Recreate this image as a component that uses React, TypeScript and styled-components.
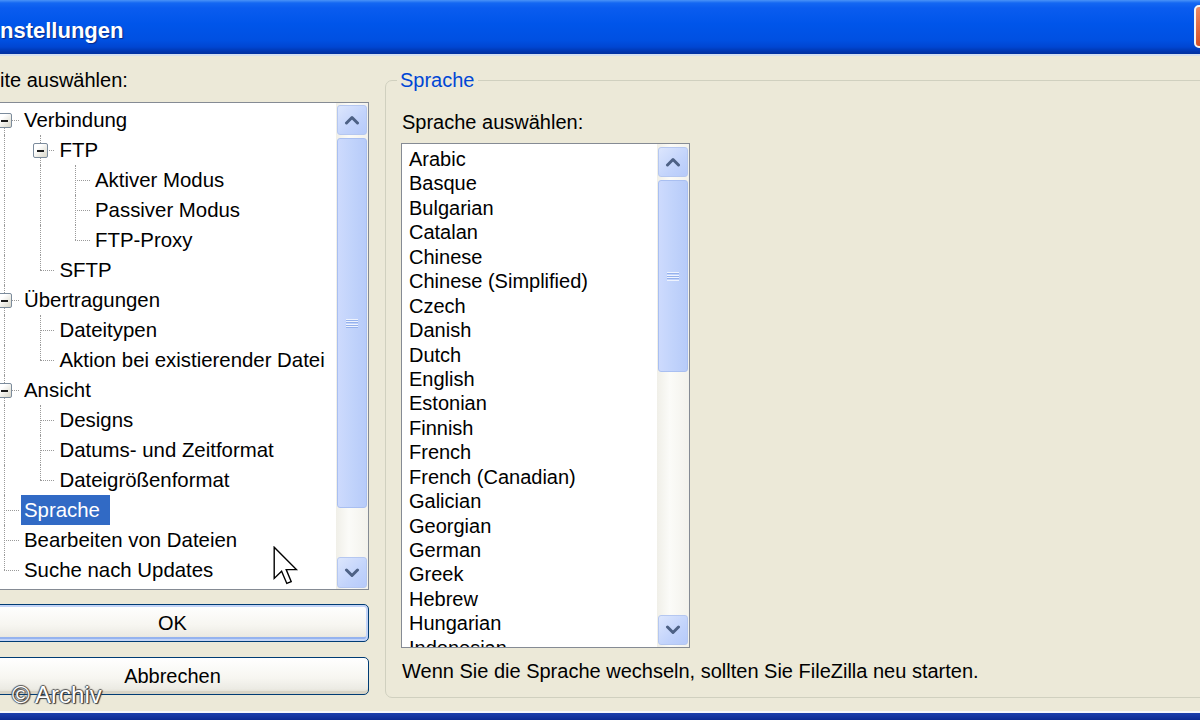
import React from 'react';
import styled, { createGlobalStyle } from 'styled-components';

const Global = createGlobalStyle`
  html, body { margin: 0; padding: 0; background: #ece9d8; }
  body { font-family: "Liberation Sans", Arial, sans-serif; }
`;

const Screen = styled.div`
  position: relative;
  width: 1200px;
  height: 720px;
  overflow: hidden;
  display: flex;
  flex-direction: column;
  background: #ece9d8;
  color: #000;
  font-size: 20px;
`;

const TitleBar = styled.div`
  height: 56px;
  flex-shrink: 0;
  box-sizing: border-box;
  padding-top: 7px;
  display: flex;
  align-items: center;
  justify-content: space-between;
  background: linear-gradient(
    to bottom,
    #4a93f7 0px,
    #1467f2 3px,
    #0a5cef 8px,
    #0055ea 24px,
    #0050e2 40px,
    #0046d2 47px,
    #0033aa 52px,
    #0030a0 54px
  );
  border-bottom: 2px solid #d3deee;
`;

const TitleText = styled.span`
  color: #fff;
  font-weight: 700;
  font-size: 22px;
  line-height: 30px;
  text-shadow: 1px 1px 1px #0a2a88;
  white-space: nowrap;
`;

const CloseBtn = styled.span`
  align-self: flex-start;
  margin-top: -2px;
  margin-right: -34px;
  width: 40px;
  height: 43px;
  box-sizing: border-box;
  border: 2px solid #f4f4f4;
  border-radius: 5px;
  background: linear-gradient(135deg, #ec8c66, #d24a22 60%, #c23a14);
`;

const Body = styled.div`
  flex: 1;
  min-height: 0;
  display: flex;
  gap: 16px;
`;

const LeftCol = styled.div`
  margin-left: -24px;
  width: 393px;
  flex-shrink: 0;
  display: flex;
  flex-direction: column;
  padding-top: 12px;
`;

const Caption = styled.div<{ $indent?: number }>`
  line-height: 24px;
  height: 24px;
  padding-left: ${(p) => p.$indent ?? 0}px;
  white-space: nowrap;
`;

const ListFrame = styled.div<{ $h: number; $w?: number }>`
  height: ${(p) => p.$h}px;
  width: ${(p) => (p.$w ? `${p.$w}px` : 'auto')};
  box-sizing: border-box;
  border: 1px solid #858b94;
  background: #fff;
  display: flex;
  flex-shrink: 0;
`;

const TreeRows = styled.div`
  flex: 1;
  min-width: 0;
  overflow: hidden;
  padding: 2px 0 0 7px;
  font-size: 20.4px;
`;

const Row = styled.div`
  height: 30px;
  display: flex;
  align-items: stretch;
  white-space: nowrap;
`;

const Guide = styled.span<{ $on: boolean }>`
  position: relative;
  width: 35.5px;
  flex-shrink: 0;
  &::before {
    content: '';
    display: ${(p) => (p.$on ? 'block' : 'none')};
    position: absolute;
    left: 20px;
    top: 0;
    bottom: 0;
    border-left: 1px dotted #9a9a9a;
  }
`;

type ConnKind = 'full' | 'top' | 'bottom';

const Connector = styled.span<{ $kind: ConnKind }>`
  position: relative;
  width: 35.5px;
  flex-shrink: 0;
  &::before {
    content: '';
    position: absolute;
    left: 20px;
    top: ${(p) => (p.$kind === 'bottom' ? '50%' : '0')};
    bottom: ${(p) => (p.$kind === 'top' ? '50%' : '0')};
    border-left: 1px dotted #9a9a9a;
  }
  &::after {
    content: '';
    position: absolute;
    left: 20px;
    right: 1px;
    top: 50%;
    border-top: 1px dotted #9a9a9a;
  }
`;

const Expander = styled.span`
  position: absolute;
  z-index: 1;
  left: 13px;
  top: 8px;
  width: 15px;
  height: 15px;
  box-sizing: border-box;
  border: 1px solid #7b8b9c;
  border-radius: 2px;
  background: linear-gradient(135deg, #ffffff 30%, #d8d6c8);
  display: flex;
  align-items: center;
  justify-content: center;
  &::before {
    content: '';
    width: 7px;
    height: 2px;
    background: #1b1b1b;
  }
`;

const ItemLabel = styled.span<{ $sel?: boolean }>`
  margin-left: 1.5px;
  padding: 0 10px 0 3px;
  line-height: 30px;
  background: ${(p) => (p.$sel ? '#316ac5' : 'transparent')};
  color: ${(p) => (p.$sel ? '#fff' : '#000')};
`;

const ScrollBar = styled.div<{ $pt: number; $pb: number }>`
  width: 32px;
  flex-shrink: 0;
  box-sizing: border-box;
  padding: ${(p) => p.$pt}px 1px ${(p) => p.$pb}px 1px;
  display: flex;
  flex-direction: column;
  background: linear-gradient(90deg, #f0efe8, #fbfbf8 40%, #f3f2ec);
`;

const ArrowBtn = styled.div`
  height: 30px;
  flex-shrink: 0;
  box-sizing: border-box;
  border: 1px solid #b5c7f0;
  border-radius: 3px;
  background: linear-gradient(135deg, #dce6fd, #c2d3fb 60%, #b6cafa);
  display: flex;
  align-items: center;
  justify-content: center;
`;

const Thumb = styled.div<{ $h: number }>`
  margin-top: 3px;
  height: ${(p) => p.$h}px;
  flex-shrink: 0;
  box-sizing: border-box;
  border: 1px solid #a9bff1;
  border-radius: 3px;
  background: linear-gradient(90deg, #cddafd, #c1d3fb 50%, #b7cbf9);
  display: flex;
  align-items: center;
  justify-content: center;
`;

const Grip = styled.span`
  width: 12px;
  height: 9px;
  background: repeating-linear-gradient(
    to bottom,
    #eef3fe 0px,
    #eef3fe 1px,
    #95b1ec 1px,
    #95b1ec 2px,
    transparent 2px,
    transparent 2.5px
  );
`;

const Spacer = styled.div`
  flex: 1;
`;

const PushButton = styled.button<{ $default?: boolean; $mt: number }>`
  margin-top: ${(p) => p.$mt}px;
  height: 38px;
  flex-shrink: 0;
  box-sizing: border-box;
  border: 1px solid #003c74;
  border-radius: 5px;
  font-family: "Liberation Sans", Arial, sans-serif;
  font-size: 20px;
  color: #000;
  padding: 0;
  background: linear-gradient(180deg, #ffffff 0%, #f7f6f1 55%, #ecebe4 85%, #dedbcd 100%);
  box-shadow: ${(p) =>
    p.$default
      ? 'inset 0 0 0 2px #c3d4f7, inset 0 -3px 0 1px #95b3ef'
      : 'inset 0 -3px 0 0 #d8d4c6'};
`;

const Group = styled.fieldset`
  margin: 12px -40px 0 0;
  flex: 1;
  min-width: 0;
  height: 630px;
  box-sizing: border-box;
  border: 1px solid #d0d0bf;
  border-radius: 7px;
  padding: 0 16px;
`;

const Legend = styled.legend`
  color: #0046d5;
  padding: 0 3px;
  margin-left: -5px;
  line-height: 24px;
  font-size: 20px;
`;

const GroupCaption = styled.div<{ $mt: number }>`
  margin-top: ${(p) => p.$mt}px;
  line-height: 24px;
  height: 24px;
  white-space: nowrap;
`;

const ListItems = styled.div`
  flex: 1;
  overflow: hidden;
  padding: 3px 0 0 7px;
`;

const ListItem = styled.div`
  height: 24.45px;
  line-height: 24.45px;
  white-space: nowrap;
`;

const BottomFrame = styled.div`
  height: 9px;
  flex-shrink: 0;
  box-sizing: border-box;
  border-top: 2px solid #f6f7fb;
  background: linear-gradient(180deg, #1c3fae, #0c2a92);
`;

const Pointer = styled.svg`
  position: absolute;
  left: 273px;
  top: 546px;
`;

const Watermark = styled.div`
  position: absolute;
  left: 12px;
  top: 680px;
  color: #fff;
  font-size: 24px;
  line-height: 30px;
  text-shadow: 1px 1px 1px #3a3a3a, -1px 0 1px #555, 0 -1px 1px #555, 1px 0 1px #444;
`;

const Chevron = ({ dir }: { dir: 'up' | 'down' }) => (
  <svg width="16" height="10" viewBox="0 0 16 10">
    <polyline
      points={dir === 'up' ? '2.5,8 8,2.5 13.5,8' : '2.5,2 8,7.5 13.5,2'}
      fill="none"
      stroke="#4d6185"
      strokeWidth="3"
      strokeLinecap="round"
      strokeLinejoin="round"
    />
  </svg>
);

type TreeItem = {
  label: string;
  guides: boolean[];
  conn: ConnKind;
  expander?: boolean;
  selected?: boolean;
};

const tree: TreeItem[] = [
  { label: 'Verbindung', guides: [], conn: 'bottom', expander: true },
  { label: 'FTP', guides: [true], conn: 'full', expander: true },
  { label: 'Aktiver Modus', guides: [true, true], conn: 'full' },
  { label: 'Passiver Modus', guides: [true, true], conn: 'full' },
  { label: 'FTP-Proxy', guides: [true, true], conn: 'top' },
  { label: 'SFTP', guides: [true], conn: 'top' },
  { label: 'Übertragungen', guides: [], conn: 'full', expander: true },
  { label: 'Dateitypen', guides: [true], conn: 'full' },
  { label: 'Aktion bei existierender Datei', guides: [true], conn: 'top' },
  { label: 'Ansicht', guides: [], conn: 'full', expander: true },
  { label: 'Designs', guides: [true], conn: 'full' },
  { label: 'Datums- und Zeitformat', guides: [true], conn: 'full' },
  { label: 'Dateigrößenformat', guides: [true], conn: 'top' },
  { label: 'Sprache', guides: [], conn: 'full', selected: true },
  { label: 'Bearbeiten von Dateien', guides: [], conn: 'full' },
  { label: 'Suche nach Updates', guides: [], conn: 'top' },
];

const languages = [
  'Arabic',
  'Basque',
  'Bulgarian',
  'Catalan',
  'Chinese',
  'Chinese (Simplified)',
  'Czech',
  'Danish',
  'Dutch',
  'English',
  'Estonian',
  'Finnish',
  'French',
  'French (Canadian)',
  'Galician',
  'Georgian',
  'German',
  'Greek',
  'Hebrew',
  'Hungarian',
  'Indonesian',
];

export default function App() {
  return (
    <>
      <Global />
      <Screen>
        <TitleBar>
          <TitleText>nstellungen</TitleText>
          <CloseBtn />
        </TitleBar>
        <Body>
          <LeftCol>
            <Caption $indent={24}>ite auswählen:</Caption>
            <ListFrame $h={488} style={{ marginTop: 10 }}>
              <TreeRows>
                {tree.map((t) => (
                  <Row key={t.label}>
                    {t.guides.map((g, i) => (
                      <Guide key={i} $on={g} />
                    ))}
                    <Connector $kind={t.conn}>{t.expander && <Expander />}</Connector>
                    <ItemLabel $sel={t.selected}>{t.label}</ItemLabel>
                  </Row>
                ))}
              </TreeRows>
              <ScrollBar $pt={2} $pb={1}>
                <ArrowBtn>
                  <Chevron dir="up" />
                </ArrowBtn>
                <Thumb $h={370}>
                  <Grip />
                </Thumb>
                <Spacer />
                <ArrowBtn style={{ height: 31 }}>
                  <Chevron dir="down" />
                </ArrowBtn>
              </ScrollBar>
            </ListFrame>
            <PushButton $default $mt={14}>OK</PushButton>
            <PushButton $mt={15}>Abbrechen</PushButton>
          </LeftCol>
          <Group>
            <Legend>Sprache</Legend>
            <GroupCaption $mt={18}>Sprache auswählen:</GroupCaption>
            <ListFrame $h={505} $w={289} style={{ marginTop: 9, marginLeft: -1 }}>
              <ListItems>
                {languages.map((l) => (
                  <ListItem key={l}>{l}</ListItem>
                ))}
              </ListItems>
              <ScrollBar $pt={3} $pb={2}>
                <ArrowBtn>
                  <Chevron dir="up" />
                </ArrowBtn>
                <Thumb $h={192}>
                  <Grip />
                </Thumb>
                <Spacer />
                <ArrowBtn>
                  <Chevron dir="down" />
                </ArrowBtn>
              </ScrollBar>
            </ListFrame>
            <GroupCaption $mt={11}>
              Wenn Sie die Sprache wechseln, sollten Sie FileZilla neu starten.
            </GroupCaption>
          </Group>
        </Body>
        <BottomFrame />
        <Pointer width="26" height="40" viewBox="0 0 13 20">
          <path
            d="M0.6 0.6 V16.2 L4.3 12.6 L6.9 18.7 L9.1 17.8 L6.6 11.8 H11.7 Z"
            fill="#fff"
            stroke="#000"
            strokeWidth="0.7"
            strokeLinejoin="miter"
          />
        </Pointer>
        <Watermark>© Archiv</Watermark>
      </Screen>
    </>
  );
}
